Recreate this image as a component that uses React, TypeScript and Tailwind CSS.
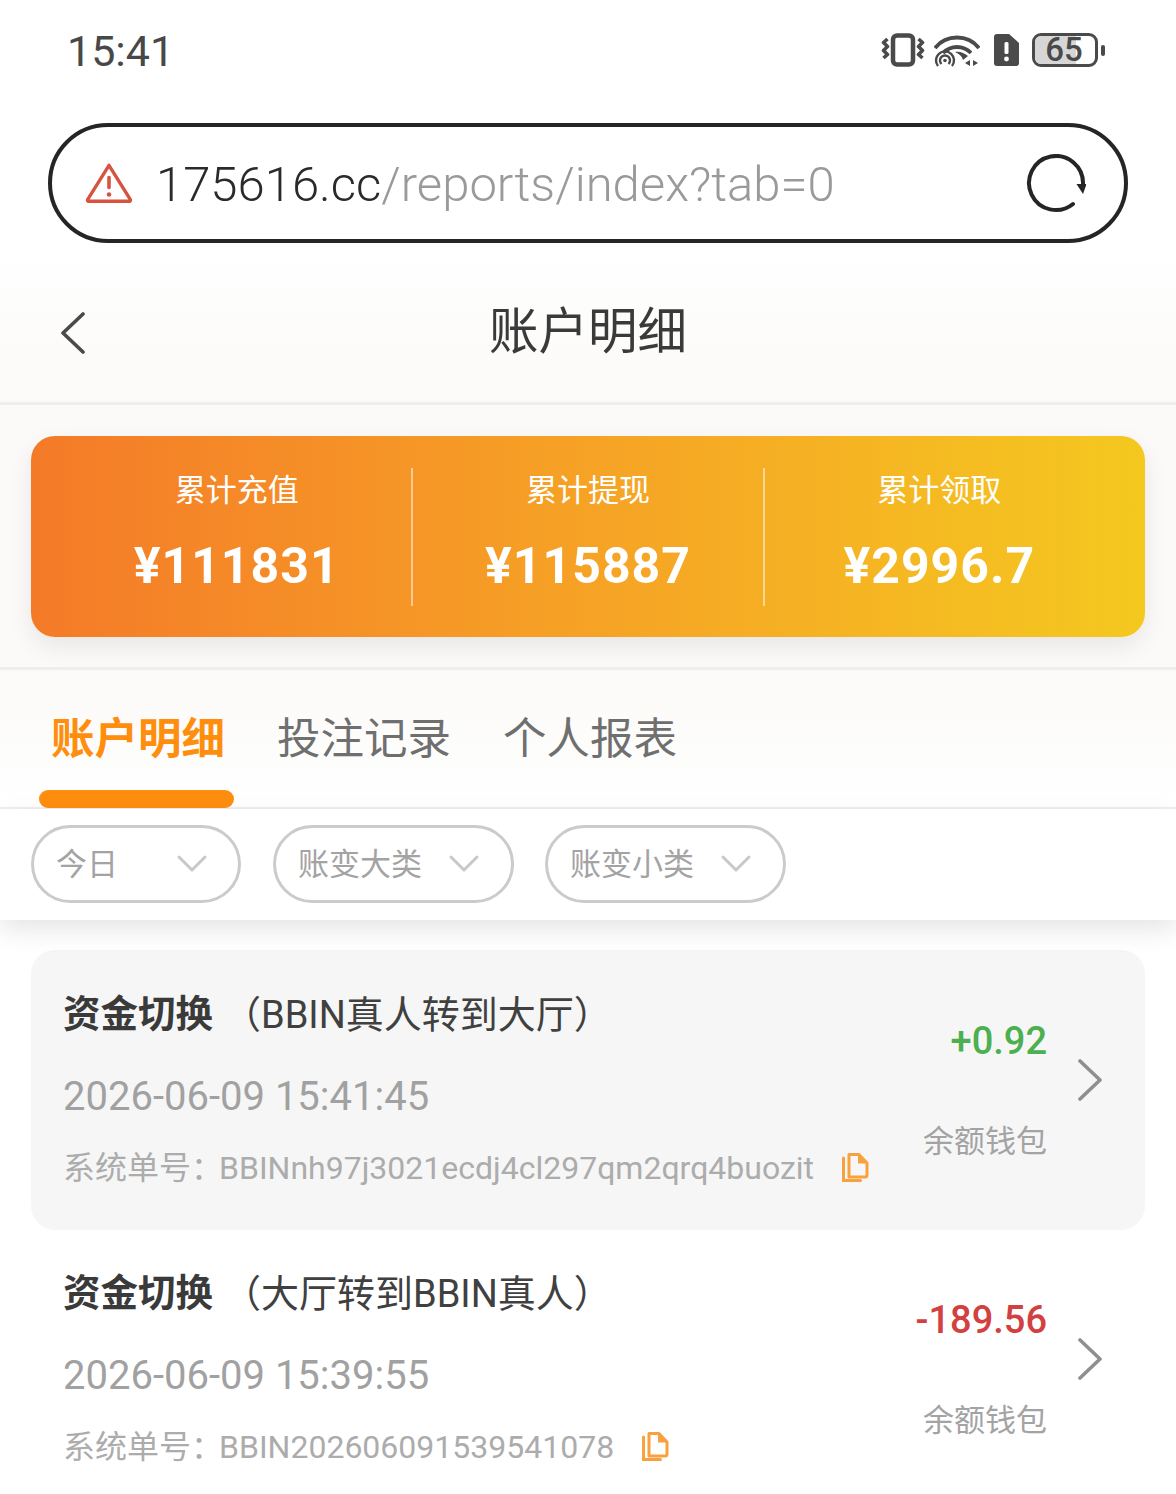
import React from "react";

function Copy({ className = "" }: { className?: string }) {
  return (
    <svg width="28" height="32" viewBox="0 0 28 32" className={className}>
      <path d="M2.5 6v22.5h17" fill="none" stroke="#f7a23e" strokeWidth="3" strokeLinecap="round" />
      <path d="M8 2.5h10l8 8.500V23a2 2 0 0 1-2 2H8z" fill="none" stroke="#f7a23e" strokeWidth="3" strokeLinejoin="round" />
      <path d="M17 1.500l10 10H17z" fill="#f7a23e" />
    </svg>
  );
}

function Chevron({ size = 30 }: { size?: number }) {
  return (
    <svg width={size} height={size * 0.6} viewBox="0 0 30 18" fill="none">
      <path d="M2 2l13 13L28 2" stroke="#c8c8c8" strokeWidth="3" strokeLinecap="round" strokeLinejoin="round" />
    </svg>
  );
}

function RightArrow() {
  return (
    <svg width="26" height="42" viewBox="0 0 26 42" fill="none">
      <path d="M3 2l20 19L3 40" stroke="#8f8f8f" strokeWidth="3.6" strokeLinecap="round" strokeLinejoin="round" />
    </svg>
  );
}

function StatusIcons() {
  return (
    <div className="flex items-center">
      <svg width="44" height="34" viewBox="0 0 44 34" fill="none" className="mr-[9px]">
        <rect x="12" y="2.500" width="20" height="29" rx="4" stroke="#4a4a4a" strokeWidth="4.500" />
        <path d="M6.500 6l-4 3.500 4 4-4 4 4 4-4 3.500" stroke="#4a4a4a" strokeWidth="3.600" strokeLinejoin="round" />
        <path d="M37.500 6l4 3.500-4 4 4 4-4 4 4 3.500" stroke="#4a4a4a" strokeWidth="3.600" strokeLinejoin="round" />
      </svg>
      <svg width="46" height="34" viewBox="0 0 46 34" fill="none" className="mr-[13px]">
        <path d="M1 15C12 1 34 1 45 15" stroke="#4a4a4a" strokeWidth="3.800" />
        <path d="M9 20c8-8 20-8 28 0" stroke="#4a4a4a" strokeWidth="3.800" />
        <path d="M21 19c5-1 9 1 13 4l-5 4c-1-4-4-6-8-8z" fill="#4a4a4a" />
        <path d="M4 33a9 9 0 1 1 14 0" stroke="#4a4a4a" strokeWidth="2.400" />
        <path d="M7.500 31a5 5 0 1 1 7 0" stroke="#4a4a4a" strokeWidth="2.400" />
        <circle cx="11" cy="27.500" r="1.800" fill="#4a4a4a" />
        <path d="M36 27v6l-5-3zM39 27v6l5-3z" fill="#4a4a4a" />
      </svg>
      <svg width="27" height="34" viewBox="0 0 27 34" className="mr-[12px]">
        <path d="M4 1h12l10 9v20a3 3 0 0 1-3 3H4a3 3 0 0 1-3-3V4a3 3 0 0 1 3-3z" fill="#4a4a4a" />
        <rect x="11.500" y="9" width="4" height="12" rx="1.500" fill="#fff" />
        <circle cx="13.500" cy="26" r="2.400" fill="#fff" />
      </svg>
      <div className="relative flex h-[34px] w-[66px] items-center rounded-[9px] border-[3px] border-[#4a4a4a]">
        <div className="h-full w-[41px] rounded-l-[6px] bg-[#d6d6d6]" />
        <span className="absolute inset-0 flex items-center justify-center pr-[2px] text-[33px] font-medium leading-[28px] text-[#4a4a4a]">65</span>
      </div>
      <div className="ml-[3px] h-[11px] w-[4px] rounded-[2px] bg-[#4a4a4a]" />
    </div>
  );
}

function Stat({ label, value, divider }: { label: string; value: string; divider?: boolean }) {
  return (
    <div className="relative flex flex-1 flex-col items-center">
      <div className="mt-[37px] text-[31px] leading-[36px] text-white">{label}</div>
      <div className="mt-[27px] text-[50px] font-bold leading-[60px] tracking-[1px] text-white">{value}</div>
      {divider && <div className="absolute right-[-1px] top-[32px] h-[138px] w-[2px] bg-white/50" />}
    </div>
  );
}

function Select({ label, arrowGap, width }: { label: string; arrowGap: string; width: string }) {
  return (
    <div className={`flex h-[78px] items-center rounded-full border-[3px] border-[#cbcbcb] pl-[22px] ${width}`}>
      <span className="text-[31px] leading-none text-[#a3a3a3]">{label}</span>
      <span className={arrowGap}>
        <Chevron />
      </span>
    </div>
  );
}

function Row({
  title, sub, time, no, amount, color, active,
}: {
  title: string; sub: string; time: string; no: string; amount: string; color: string; active?: boolean;
}) {
  return (
    <div className={`relative mx-[31px] flex h-[280px] rounded-[24px] pl-[32px] ${active ? "bg-[#f6f6f6]" : "-mt-[1px]"}`}>
      <div className="flex-1">
        <div className="mt-[42px] flex h-[46px] items-center leading-none text-[#404040]">
          <span className="text-[37.500px] font-bold text-[#3a3a3a]">{title}</span>
          <span className="ml-[10px] text-[38px]">{sub}</span>
        </div>
        <div className="mt-[36px] h-[46px] text-[40px] leading-[46px] text-[#a1a1a1]">{time}</div>
        <div className="mt-[27px] flex h-[42px] items-center text-[32px] leading-none text-[#acacac]">
          <span>系统单号：</span>
          <span className="-ml-[4px]">{no}</span>
          <Copy className="ml-[27px]" />
        </div>
      </div>
      <div className="mr-[98px] flex flex-col items-end">
        <div className={`mt-[68px] text-[38px] font-medium leading-[46px] ${color}`}>{amount}</div>
        <div className="mt-[55px] text-[31px] leading-[46px] text-[#a3a3a3]">余额钱包</div>
      </div>
      <div className="absolute right-[42px] top-[109px]">
        <RightArrow />
      </div>
    </div>
  );
}

export default function App() {
  return (
    <div className="h-[1494px] w-[1176px] overflow-hidden bg-white font-['Roboto','Noto_Sans_CJK_SC',sans-serif] text-[#333]">
      {/* status bar */}
      <div className="flex h-[100px] items-center justify-between pl-[67px] pr-[71px]">
        <span className="pt-[2px] text-[43px] leading-none text-[#484848]">15:41</span>
        <StatusIcons />
      </div>

      {/* url bar */}
      <div className="mx-[48px] mt-[23px] flex h-[120px] items-center rounded-full border-[4px] border-[#252525] bg-white pl-[33px] pr-[38px]">
        <svg width="48" height="42" viewBox="0 0 46 40" fill="none">
          <path d="M23 3L2.500 36a1 1 0 0 0 1 1.500h39a1 1 0 0 0 1-1.500z" stroke="#d5533f" strokeWidth="3.200" strokeLinejoin="round" />
          <rect x="21.300" y="13" width="3.400" height="13" rx="1.600" fill="#d5533f" />
          <circle cx="23" cy="31" r="2.200" fill="#d5533f" />
        </svg>
        <div className="ml-[23px] flex-1 pt-[3px] text-[49px] font-light leading-none">
          <span className="text-[#2a2a2a]">175616.cc</span>
          <span className="text-[#9a9a9a]">/reports/index?tab=0</span>
        </div>
        <svg width="60" height="60" viewBox="0 0 60 60" fill="none" className="mt-[2px]">
          <path d="M47 50A27 27 0 1 1 57 30" stroke="#252525" strokeWidth="4" strokeLinecap="round" />
          <path d="M50.500 30h10l-3.500 10z" fill="#252525" />
        </svg>
      </div>

      {/* header */}
      <div className="relative flex h-[162px] items-center justify-center border-b-[3px] border-[#f0eeec] bg-gradient-to-b from-white to-[#fbfaf8] pt-[20px]">
        <svg width="26" height="42" viewBox="0 0 26 42" fill="none" className="absolute left-[60px] top-[69px]">
          <path d="M23 2L3 21l20 19" stroke="#4a4a4a" strokeWidth="3.600" strokeLinecap="round" strokeLinejoin="round" />
        </svg>
        <span className="text-[49.500px] leading-none text-[#3a3a3a]">账户明细</span>
      </div>

      {/* summary */}
      <div className="h-[265px] border-b-[3px] border-[#f0eeec] bg-[#fbfaf8] px-[31px] pt-[31px]">
        <div className="flex h-[201px] rounded-[24px] bg-gradient-to-r from-[#f47a28] to-[#f4c81f] px-[30px] shadow-[0_10px_24px_rgba(0,0,0,0.08)]">
          <Stat label="累计充值" value="¥111831" divider />
          <Stat label="累计提现" value="¥115887" divider />
          <Stat label="累计领取" value="¥2996.7" />
        </div>
      </div>

      {/* tabs */}
      <div className="relative flex h-[139px] border-b-[2px] border-[#efefef] bg-gradient-to-b from-[#fbfaf8] to-white pl-[51px] pt-[45px] text-[43.500px] leading-[50px]">
        <span className="font-bold text-[#ff8e0e]">账户明细</span>
        <span className="ml-[52px] text-[#6f6f6f]">投注记录</span>
        <span className="ml-[52px] text-[#6f6f6f]">个人报表</span>
        <div className="absolute bottom-[-1px] left-[39px] h-[18px] w-[195px] rounded-[9px] bg-[#ff8e0e]" />
      </div>

      {/* filters */}
      <div className="relative z-10 flex h-[111px] gap-[32px] bg-white pl-[31px] pt-[16px] shadow-[0_10px_24px_rgba(0,0,0,0.1)]">
        <Select label="今日" width="w-[210px]" arrowGap="ml-[59px]" />
        <Select label="账变大类" width="w-[241px]" arrowGap="ml-[27px]" />
        <Select label="账变小类" width="w-[241px] -ml-[1px]" arrowGap="ml-[27px]" />
      </div>

      {/* list */}
      <div className="pt-[30px]">
        <Row active title="资金切换" sub="（BBIN真人转到大厅）" time="2026-06-09 15:41:45" no="BBINnh97j3021ecdj4cl297qm2qrq4buozit" amount="+0.92" color="text-[#4caf50]" />
        <Row title="资金切换" sub="（大厅转到BBIN真人）" time="2026-06-09 15:39:55" no="BBIN202606091539541078" amount="-189.56" color="text-[#d2403f]" />
      </div>
    </div>
  );
}
